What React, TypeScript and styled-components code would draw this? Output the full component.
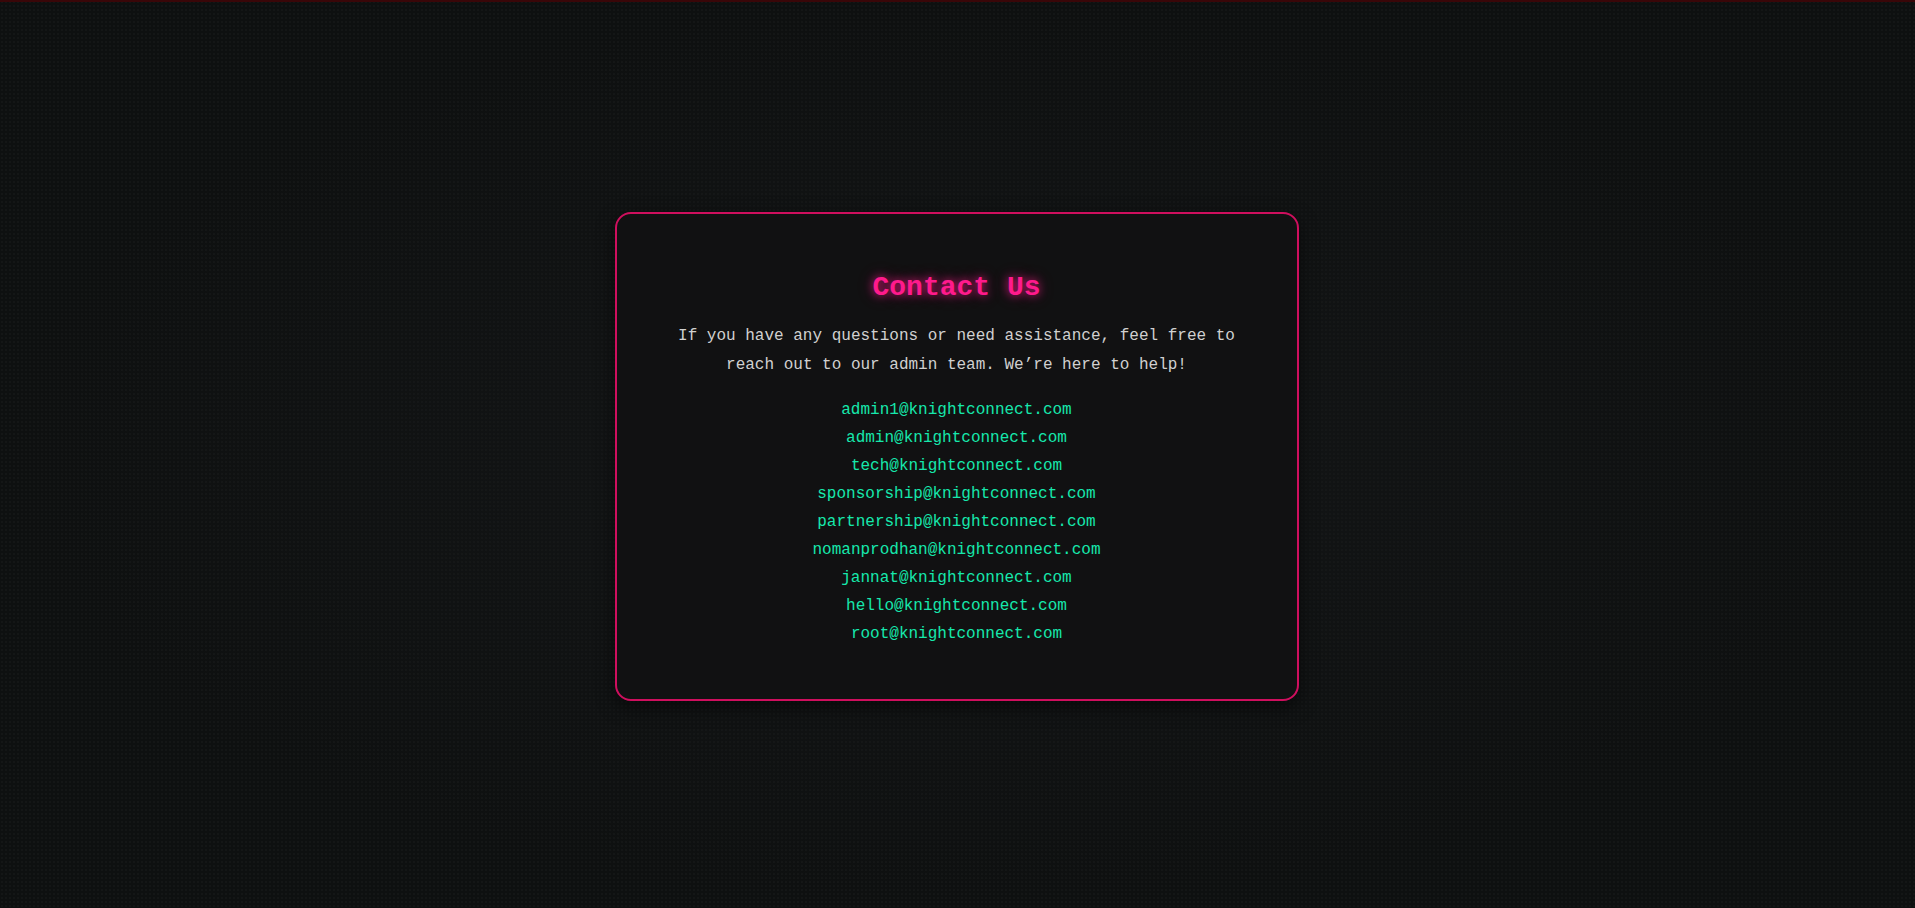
import React from "react";
import styled, { createGlobalStyle } from "styled-components";

const GlobalStyle = createGlobalStyle`
  html, body {
    margin: 0;
    padding: 0;
    height: 100%;
  }
  body {
    background-color: #0e1010;
    background-image:
      radial-gradient(ellipse at center, rgba(24, 26, 28, 0.55) 0%, rgba(14, 16, 16, 0) 70%),
      radial-gradient(rgba(255, 255, 255, 0.025) 1px, transparent 1px);
    background-size: 100% 100%, 4px 4px;
    font-family: "Liberation Mono", "Courier New", monospace;
  }
  #root {
    min-height: 100vh;
  }
`;

const Page = styled.div`
  min-height: 100vh;
  box-sizing: border-box;
  border-top: 2px solid #3a0608;
  display: flex;
  align-items: center;
  justify-content: center;
`;

const Card = styled.section`
  box-sizing: border-box;
  width: 684px;
  height: 489px;
  margin: 2px 2px 0 0;
  padding: 58px 40px 48px;
  background: #111112;
  border: 2px solid #cf0f5e;
  border-radius: 16px;
  box-shadow: 0 6px 18px rgba(0, 0, 0, 0.55);
  display: flex;
  flex-direction: column;
  align-items: center;
  text-align: center;
`;

const Title = styled.h2`
  margin: 0;
  font-family: "Liberation Mono", "Courier New", monospace;
  font-size: 28px;
  line-height: 32px;
  font-weight: 700;
  color: #ff1a8c;
  text-shadow: 0 0 8px rgba(255, 26, 140, 0.75), 0 0 16px rgba(255, 26, 140, 0.35);
`;

const Lead = styled.p`
  margin: 18px 0 0;
  font-size: 16px;
  line-height: 29.5px;
  color: #d0d0d0;
`;

const EmailList = styled.ul`
  list-style: none;
  margin: 15px 0 0;
  padding: 0;
`;

const Email = styled.li`
  font-size: 16px;
  line-height: 28px;
  color: #16e8ac;
`;

const emails = [
  "admin1@knightconnect.com",
  "admin@knightconnect.com",
  "tech@knightconnect.com",
  "sponsorship@knightconnect.com",
  "partnership@knightconnect.com",
  "nomanprodhan@knightconnect.com",
  "jannat@knightconnect.com",
  "hello@knightconnect.com",
  "root@knightconnect.com",
];

export default function App() {
  return (
    <>
      <GlobalStyle />
      <Page>
        <Card>
          <Title>Contact Us</Title>
          <Lead>
            If you have any questions or need assistance, feel free to reach out to our admin
            team. We’re here to help!
          </Lead>
          <EmailList>
            {emails.map((e) => (
              <Email key={e}>{e}</Email>
            ))}
          </EmailList>
        </Card>
      </Page>
    </>
  );
}
